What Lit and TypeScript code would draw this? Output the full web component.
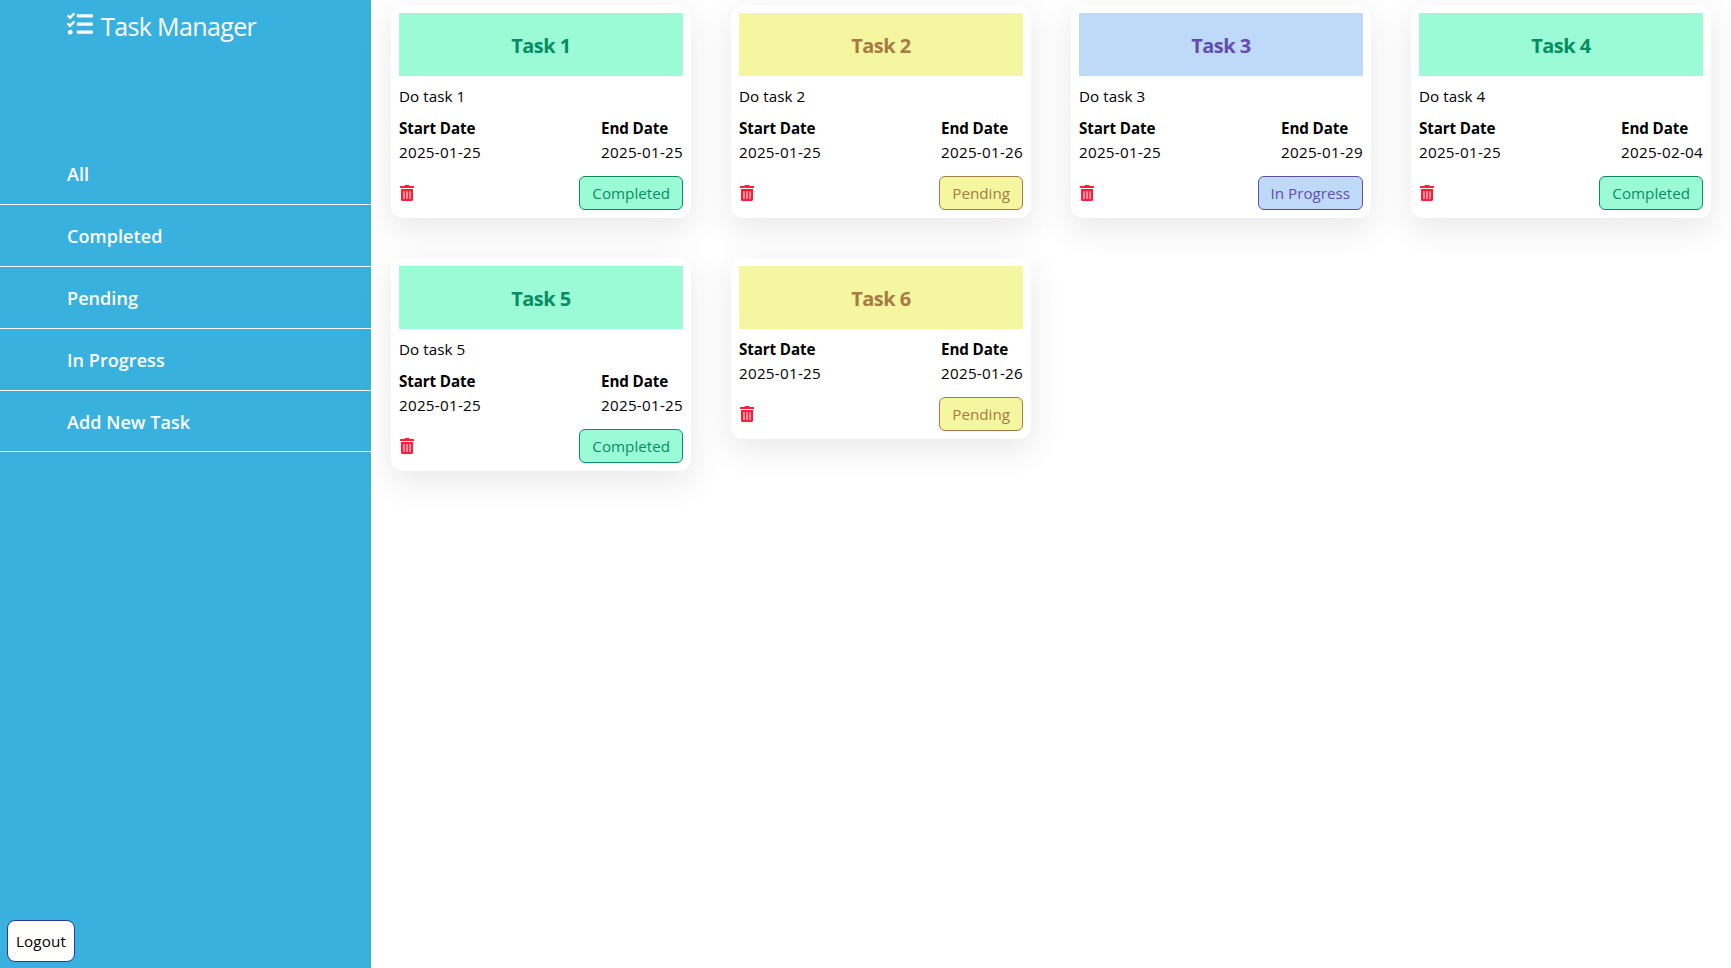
import { LitElement, html, css } from "lit";
import { customElement, property } from "lit/decorators.js";

type Status = "Completed" | "Pending" | "In Progress";

interface Task {
  title: string;
  description: string;
  start: string;
  end: string;
  status: Status;
}

const TASKS: Task[] = [
  { title: "Task 1", description: "Do task 1", start: "2025-01-25", end: "2025-01-25", status: "Completed" },
  { title: "Task 2", description: "Do task 2", start: "2025-01-25", end: "2025-01-26", status: "Pending" },
  { title: "Task 3", description: "Do task 3", start: "2025-01-25", end: "2025-01-29", status: "In Progress" },
  { title: "Task 4", description: "Do task 4", start: "2025-01-25", end: "2025-02-04", status: "Completed" },
  { title: "Task 5", description: "Do task 5", start: "2025-01-25", end: "2025-01-25", status: "Completed" },
  { title: "Task 6", description: "", start: "2025-01-25", end: "2025-01-26", status: "Pending" },
];

const NAV = ["All", "Completed", "Pending", "In Progress", "Add New Task"];

@customElement("task-card")
class TaskCard extends LitElement {
  @property({ attribute: false }) task!: Task;

  static styles = css`
    :host { display: block; }
    .card {
      box-sizing: border-box;
      width: 300px;
      padding: 8px;
      border-radius: 12px;
      background: #fff;
      box-shadow: rgba(90, 95, 105, 0.14) 0 10px 32px 0;
    }
    p { margin: 0; }
    .title {
      margin: 0 0 8px;
      height: 63px;
      line-height: 65px;
      text-align: center;
      font-size: 20px;
      font-weight: 700;
      letter-spacing: -0.5px;
    }
    .desc { margin-bottom: 8px; letter-spacing: 0.06px; }
    .dates, .foot { display: flex; justify-content: space-between; }
    .foot { margin-top: 12px; align-items: center; }
    .label { height: 24px; line-height: 25px; font-weight: 700; letter-spacing: -0.12px; }
    .date { letter-spacing: 0.27px; }
    .trash {
      display: flex;
      padding: 0 0 0 1px;
      border: 0;
      background: none;
      color: #ff1c3a;
    }
    .badge {
      box-sizing: border-box;
      height: 34px;
      padding: 0 12px;
      line-height: 33px;
      border: 1px solid;
      border-radius: 6px;
    }
    .completed { background: #9cfbd7; color: #078d63; }
    .pending { background: #f5f6a0; color: #a67b45; }
    .in-progress { background: #bfdaf8; color: #634cae; }
  `;

  render() {
    const t = this.task;
    const tone = t.status.toLowerCase().replace(" ", "-");
    return html`
      <article class="card">
        <h2 class="title ${tone}">${t.title}</h2>
        ${t.description ? html`<p class="desc">${t.description}</p>` : null}
        <div class="dates">
          <div><p class="label">Start Date</p><p class="date">${t.start}</p></div>
          <div><p class="label">End Date</p><p class="date">${t.end}</p></div>
        </div>
        <div class="foot">
          <button class="trash" aria-label="Delete">
            <svg width="14" height="16" viewBox="0 0 448 512" fill="currentColor">
              <path d="M32 464a48 48 0 0 0 48 48h288a48 48 0 0 0 48-48V128H32zm272-256a16 16 0 0 1 32 0v224a16 16 0 0 1-32 0zm-96 0a16 16 0 0 1 32 0v224a16 16 0 0 1-32 0zm-96 0a16 16 0 0 1 32 0v224a16 16 0 0 1-32 0zM432 32H312l-9.4-18.7A24 24 0 0 0 281.1 0H166.8a23.72 23.72 0 0 0-21.4 13.3L136 32H16A16 16 0 0 0 0 48v32a16 16 0 0 0 16 16h416a16 16 0 0 0 16-16V48a16 16 0 0 0-16-16z"/>
            </svg>
          </button>
          <span class="badge ${tone}">${t.status}</span>
        </div>
      </article>
    `;
  }
}

@customElement("app-root")
class AppRoot extends LitElement {
  static styles = css`
    :host {
      display: flex;
      height: 100vh;
      overflow: hidden;
      background: #fff;
      color: #000;
      font: 15.2px/24px "Open Sans", "Noto Sans", sans-serif;
    }
    .side {
      box-sizing: border-box;
      width: 371px;
      flex: none;
      display: flex;
      flex-direction: column;
      background: #38b1df;
      color: #fff;
    }
    .brand {
      display: flex;
      height: 143.4px;
      padding-left: 67px;
      gap: 8px;
      font-size: 25px;
      line-height: 52px;
      letter-spacing: -0.62px;
    }
    .brand svg { margin-top: 11px; }
    .item {
      box-sizing: border-box;
      height: 61.8px;
      line-height: 61.8px;
      padding: 1px 0 0 67px;
      border-bottom: 1px solid #fff;
      font-size: 18px;
      font-weight: 600;
      letter-spacing: 0.06px;
    }
    .logout {
      box-sizing: border-box;
      align-self: flex-start;
      margin: auto 0 6px 7px;
      height: 42px;
      padding: 8px;
      font: inherit;
      letter-spacing: 0.15px;
      color: #000;
      background: #fff;
      border: 1px solid #2b3a94;
      border-radius: 8px;
    }
    .board {
      display: grid;
      grid-template-columns: repeat(4, 300px);
      grid-auto-rows: max-content;
      align-items: start;
      gap: 40px;
      padding: 5px 20px;
    }
  `;

  render() {
    return html`
      <aside class="side">
        <div class="brand">
          <svg width="26" height="26" viewBox="0 0 512 512" fill="currentColor">
            <path d="M139.61 35.5a12 12 0 0 0-17 0L58.93 98.81l-22.7-22.12a12 12 0 0 0-17 0L3.53 92.41a12 12 0 0 0 0 17l47.59 47.4a12.78 12.78 0 0 0 17.61 0l15.59-15.62L156.52 69a12.09 12.09 0 0 0 .09-17zm0 159.19a12 12 0 0 0-17 0l-63.68 63.72-22.7-22.1a12 12 0 0 0-17 0L3.53 252a12 12 0 0 0 0 17L51 316.5a12.77 12.77 0 0 0 17.6 0l15.7-15.69 72.2-72.22a12 12 0 0 0 .09-16.9zM64 368c-26.49 0-48.59 21.5-48.59 48S37.53 464 64 464a48 48 0 0 0 0-96zm432 16H208a16 16 0 0 0-16 16v32a16 16 0 0 0 16 16h288a16 16 0 0 0 16-16v-32a16 16 0 0 0-16-16zm0-320H208a16 16 0 0 0-16 16v32a16 16 0 0 0 16 16h288a16 16 0 0 0 16-16V80a16 16 0 0 0-16-16zm0 160H208a16 16 0 0 0-16 16v32a16 16 0 0 0 16 16h288a16 16 0 0 0 16-16v-32a16 16 0 0 0-16-16z"/>
          </svg>
          <span>Task Manager</span>
        </div>
        <nav>${NAV.map((n) => html`<div class="item">${n}</div>`)}</nav>
        <button class="logout">Logout</button>
      </aside>
      <main class="board">
        ${TASKS.map((t) => html`<task-card .task=${t}></task-card>`)}
      </main>
    `;
  }
}
